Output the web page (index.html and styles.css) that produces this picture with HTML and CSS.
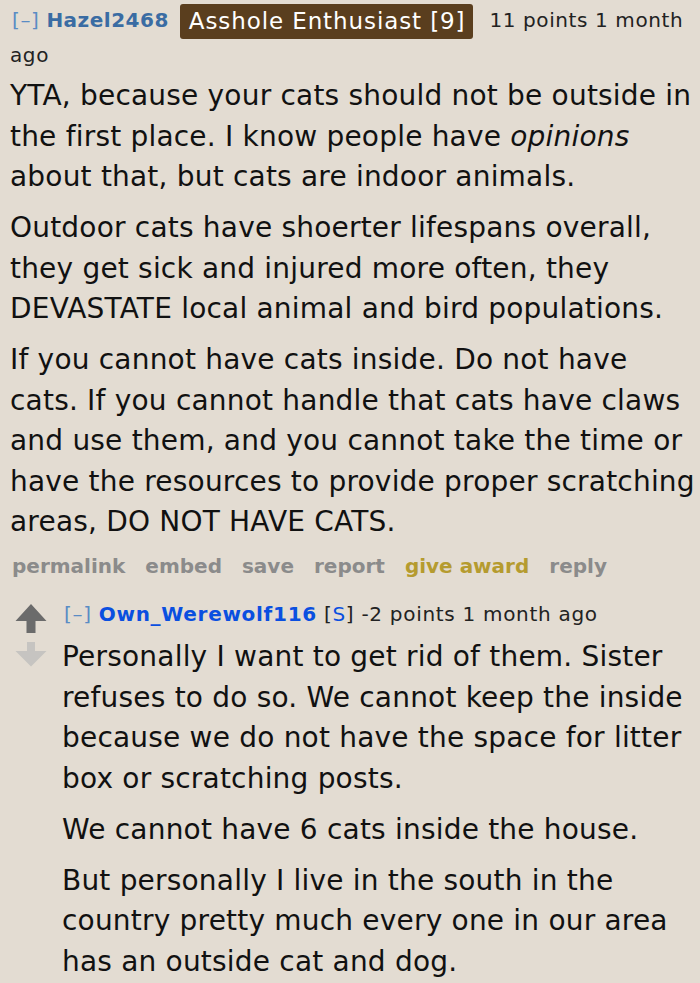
FILE: index.html
```html
<!DOCTYPE html>
<html>
<head>
<meta charset="utf-8">
<link rel="stylesheet" href="styles.css">
</head>
<body>
<div class="comment">
  <div class="tagline">
    <span class="toggle">[–]</span> <span class="author">Hazel2468</span> <span class="flair">Asshole Enthusiast [9]</span> <span class="score">11 points 1 month ago</span>
  </div>
  <div class="md">
    <p>YTA, because your cats should not be outside in the first place. I know people have <em>opinions</em> about that, but cats are indoor animals.</p>
    <p>Outdoor cats have shoerter lifespans overall, they get sick and injured more often, they DEVASTATE local animal and bird populations.</p>
    <p>If you cannot have cats inside. Do not have cats. If you cannot handle that cats have claws and use them, and you cannot take the time or have the resources to provide proper scratching areas, DO NOT HAVE CATS.</p>
  </div>
  <ul class="buttons">
    <li>permalink</li>
    <li>embed</li>
    <li>save</li>
    <li>report</li>
    <li class="award">give award</li>
    <li>reply</li>
  </ul>
  <div class="child">
    <div class="votes">
      <svg class="arrow" width="32" height="30" viewBox="0 0 32 30"><path d="M16 0 L31.5 17 L20.5 17 L20.5 29 L11.5 29 L11.5 17 L0.5 17 Z" fill="#6b6b6b"/></svg>
      <svg class="arrow" width="32" height="25" viewBox="0 0 32 25"><path d="M12 0 L20 0 L20 9 L31.5 9 L16 24.5 L0.5 9 L12 9 Z" fill="#c6c4c1"/></svg>
    </div>
    <div class="entry">
      <div class="tagline small">
        <span class="toggle">[–]</span> <span class="author op">Own_Werewolf116</span> <span class="sub">[<span class="s">S</span>]</span> <span class="score">-2 points 1 month ago</span>
      </div>
      <div class="md">
        <p>Personally I want to get rid of them. Sister refuses to do so. We cannot keep the inside because we do not have the space for litter box or scratching posts.</p>
        <p>We cannot have 6 cats inside the house.</p>
        <p>But personally I live in the south in the country pretty much every one in our area has an outside cat and dog.</p>
      </div>
    </div>
  </div>
</div>
</body>
</html>
```
FILE: styles.css
```css
html, body {
  margin: 0;
  padding: 0;
  background: #e3dcd2;
}
body {
  font-family: "DejaVu Sans", Verdana, sans-serif;
  color: #111;
}
.comment {
  padding: 0 0 0 10px;
}
.tagline {
  font-size: 20px;
  letter-spacing: 0.6px;
  line-height: 33px;
  padding-top: 4px;
  color: #222;
}
.toggle {
  color: #5a8cc4;
  margin-left: 2px;
}
.author {
  color: #3a6ca3;
  font-weight: bold;
  letter-spacing: 0.5px;
}
.flair {
  display: inline-block;
  background: #5a3e1e;
  color: #fff;
  font-size: 23px;
  letter-spacing: 0.9px;
  line-height: 35px;
  padding: 0 8px 0 9px;
  border-radius: 3px;
  margin: 0 9px 0 4px;
  vertical-align: middle;
}
.score {
  color: #222;
}
.md {
  font-size: 28px;
  letter-spacing: 0.2px;
  line-height: 40.5px;
  margin-top: 4px;
}
.md p {
  margin: 0 0 10.5px 0;
}
.md em {
  font-style: italic;
}
.buttons {
  list-style: none;
  margin: -2px 0 0 0;
  padding: 0 0 0 2px;
  display: flex;
  gap: 20px;
  font-size: 20px;
  font-weight: bold;
  color: #8b8b8b;
  line-height: 30px;
}
.buttons .award {
  color: #b59b2f;
}
.child {
  display: flex;
  margin-top: 18px;
}
.votes {
  width: 47px;
  display: flex;
  flex-direction: column;
  align-items: flex-start;
  padding-left: 5px;
  padding-top: 5px;
  gap: 8px;
  flex-shrink: 0;
}
.arrow {
  display: block;
}
.entry {
  flex: 1;
  min-width: 0;
}
.tagline.small {
  line-height: 30px;
  padding-top: 0;
  letter-spacing: 0.7px;
}
.entry .md {
  margin-top: 8px;
}
.op {
  color: #0a4fe0;
  letter-spacing: 0.7px;
}
.sub {
  color: #222;
}
.sub .s {
  color: #0a4fe0;
}
```
